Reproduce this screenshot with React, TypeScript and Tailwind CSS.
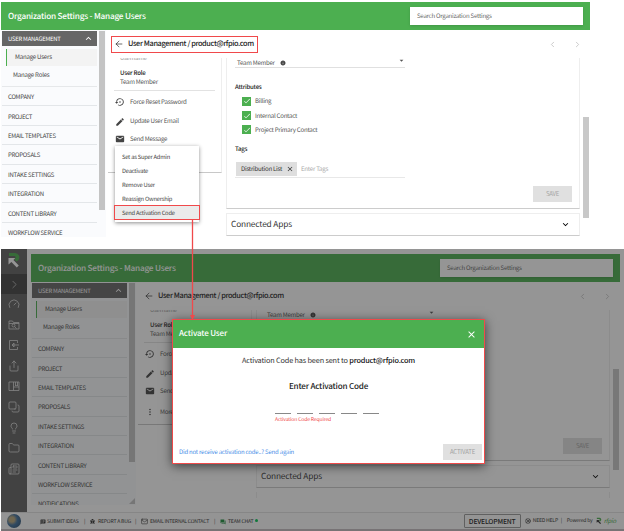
import type { ReactNode } from 'react';
import { ArrowLeft, ChevronLeft, ChevronRight, Copy, Folder, Gauge, Lightbulb, LifeBuoy, Mail, Newspaper, Share } from 'lucide-react';
import { FaBug } from 'react-icons/fa';
import {
    MdArrowDropDown, MdCheck, MdClose, MdEdit, MdEmail, MdForum, MdInfo,
    MdKeyboardArrowDown, MdKeyboardArrowUp, MdMoreVert, MdSettingsBackupRestore, MdSpeakerNotes,
} from 'react-icons/md';

const sections = ['COMPANY', 'PROJECT', 'EMAIL TEMPLATES', 'PROPOSALS', 'INTAKE SETTINGS', 'INTEGRATION', 'CONTENT LIBRARY', 'WORKFLOW SERVICE'];
const attributes = ['Billing', 'Internal Contact', 'Project Primary Contact'];
const menuItems = ['Set as Super Admin', 'Deactivate', 'Remove User', 'Reassign Ownership'];

function Logo({ className }: { className: string }) {
    return (
        <svg viewBox="0 0 14 17" className={className}>
            <path d="M2 1h6a4.3 4.3 0 0 1 3.2 7.2L9.6 9.6 7.2 7.2A1.7 1.7 0 0 0 7.6 4H2z" fill="#4caf50" />
            <path d="M1.5 6h6.8L6.4 8l5.4 5.6-2 2L4.4 10l-2.9 2.6z" fill="currentColor" />
        </svg>
    );
}

function Sidebar({ full }: { full?: boolean }) {
    return (
        <aside className="flex w-[105px] shrink-0 justify-between overflow-hidden bg-[#fafbfd] pt-px text-[#444]">
            <div className="ml-px w-[95px]">
                <div className="flex h-[15px] items-center justify-between bg-[#666] pr-[3px] pl-[6px] text-[5.9px] tracking-[-0.22px] text-white">
                    <span>USER MANAGEMENT</span>
                    <MdKeyboardArrowUp size={11} />
                </div>
                <div className="h-[41px] border-b border-[#e6e8ea] pt-[3px] text-[6.1px] tracking-[-0.22px]">
                    <div className="ml-[4px] flex h-[17px] items-center border-l border-[#4caf50] bg-[#f3f3f3] pl-[8px]">Manage Users</div>
                    <div className="flex h-[18px] items-center pl-[11px]">Manage Roles</div>
                </div>
                {sections.map((name) => (
                    <div key={name} className="flex h-[19.4px] items-center border-b border-[#e3e6e9] pt-[2px] pl-[6px] text-[6px] tracking-[-0.25px]">{name}</div>
                ))}
                {full && <div className="pt-[7px] pl-[6px] text-[6px] tracking-[-0.25px]">NOTIFICATIONS</div>}
            </div>
            <div className="mr-px flex flex-col justify-between">
                <div className="h-[179px] w-[6px] bg-[#c4c4c4]" />
                {full && <svg className="mb-px h-[6px] w-[6px]" viewBox="0 0 6 6"><path d="M6 0v6H0z" fill="#c4c4c4" /></svg>}
            </div>
        </aside>
    );
}

function Action({ icon, label, className }: { icon: ReactNode; label: string; className: string }) {
    return (
        <div className={`flex items-center pl-[7px] text-[6.15px] tracking-[-0.26px] ${className}`}>
            <span className="w-[15px] text-[#444]">{icon}</span>
            {label}
        </div>
    );
}

function UserCard({ more }: { more?: boolean }) {
    return (
        <div className="ml-[2px] h-[115px] w-[114px] shrink-0 border-r border-b border-r-[#eee] border-b-[#c8c8c8] text-[#555]">
            <div className="flex h-[2px] items-end overflow-hidden pl-[12px] text-[5.85px] leading-[4px] text-[#999]">Username</div>
            <div className="mx-[6px] h-[31px] border-b border-[#e2e2e2] pt-[8px] pl-[6px] text-[6.15px] leading-[9px] tracking-[-0.26px]">
                <div className="font-medium text-[#222]">User Role</div>
                <div>Team Member</div>
            </div>
            <Action className="h-[22px]" icon={<MdSettingsBackupRestore size={10} />} label="Force Reset Password" />
            <Action className="h-[17px]" icon={<MdEdit size={10} />} label="Update User Email" />
            <Action className="h-[18px]" icon={<MdEmail size={10} />} label="Send Message" />
            {more && <Action className="h-[24px]" icon={<MdMoreVert size={10} />} label="More" />}
        </div>
    );
}

function FormCard() {
    return (
        <div className="h-[151px] shrink-0 border-x border-b border-x-[#eee] border-b-[#ccc] pr-[7px] pl-[8px] text-[6.1px] tracking-[-0.24px] text-[#555]">
            <div className="flex h-[10px] w-[170px] items-center border-b border-[#e0e0e0] pt-px pl-[2px]">
                Team Member <MdInfo size={6} className="ml-[5px] text-[#444]" />
                <MdArrowDropDown size={9} className="-mr-px mb-[6px] ml-auto" />
            </div>
            <div className="mt-[14px] flex h-[10px] items-center font-medium text-[#222]">Attributes</div>
            <div className="mt-[2px]">
                {attributes.map((name) => (
                    <div key={name} className="flex h-[14.4px] items-center gap-[4px] pl-[7px]">
                        <span className="flex size-[9px] items-center justify-center bg-[#4caf50] text-white"><MdCheck size={8} /></span>
                        {name}
                    </div>
                ))}
            </div>
            <div className="mt-[6px] flex h-[12px] items-center font-medium text-[#222]">Tags</div>
            <div className="mt-[7px] flex h-[16px] w-[170px] border-b border-[#e8e8e8] pl-px">
                <span className="flex h-[14px] w-[61px] items-center justify-between bg-[#dedede] pr-[3px] pl-[5px] whitespace-nowrap text-[#333]">
                    Distribution List <MdClose size={8} />
                </span>
                <span className="flex h-[14px] items-center pl-[4px] text-[#aaa]">Enter Tags</span>
            </div>
            <button className="mt-[8px] ml-auto flex h-[16px] w-[39px] items-center justify-center bg-[#e0e0e0] text-[6px] text-[#a5a5a5]">SAVE</button>
        </div>
    );
}

function Settings({ more, framed }: { more?: boolean; framed?: boolean }) {
    return (
        <div className="flex h-full w-[589px] flex-col">
            <header className="flex h-[28px] shrink-0 items-center justify-between bg-[#4caf50] pr-[7px] pl-[7px]">
                <h1 className="text-[8.2px] font-medium tracking-[-0.2px] text-white">Organization Settings - Manage Users</h1>
                <div className="flex h-[18px] w-[173px] items-center bg-white pl-[7px] text-[6.05px] tracking-[-0.23px] text-[#666] shadow-sm">Search Organization Settings</div>
            </header>
            <div className="flex min-h-0 grow">
                <Sidebar full={more} />
                <main className="flex min-w-0 grow flex-col">
                    <div className="flex h-[28px] shrink-0 items-center justify-between pr-[8px] pl-[5px]">
                        <div className={`flex h-[17px] w-[147px] items-center border-[1.5px] text-[7.35px] font-medium tracking-[-0.37px] text-[#222] ${framed ? 'border-[#f0494b]' : 'border-transparent'}`}>
                            <ArrowLeft size={10} strokeWidth={1.6} className="mr-[4px] ml-[2px] shrink-0" />
                            <span className="whitespace-nowrap">User Management / product@rfpio.com</span>
                        </div>
                        <div className="flex gap-[16px] text-[#bbb]">
                            <ChevronLeft size={9} />
                            <ChevronRight size={9} />
                        </div>
                    </div>
                    <div className="flex max-h-[188px] min-h-0 overflow-hidden">
                        <UserCard more={more} />
                        <div className="ml-[4px] flex w-[354px] flex-col">
                            <FormCard />
                            <div className="mt-[4px] flex h-[23px] shrink-0 items-center justify-between border border-[#eee] border-b-[#ccc] pr-[8px] pl-[4px] text-[8.3px] text-[#333]">
                                Connected Apps <MdKeyboardArrowDown size={11} className="text-black" />
                            </div>
                            <div className="mt-[4px] h-[10px] shrink-0 border-x border-[#eee]" />
                        </div>
                        <div className="mt-[59px] ml-[3px] h-[101px] w-[6px] bg-[#c8c8c8]" />
                    </div>
                </main>
            </div>
        </div>
    );
}

function Rail() {
    return (
        <nav className="flex w-[26px] shrink-0 flex-col items-center bg-[#606060] text-[#ddd]">
            <Logo className="mt-[3px] h-[17px] w-[14px] shrink-0 text-white" />
            <div className="mt-[5px] flex h-[20px] w-full items-center justify-center bg-[#424242] text-[#bbb]"><ChevronRight size={13} strokeWidth={1.5} /></div>
            <div className="mt-[4px] flex flex-col items-center gap-[8.6px]">
                <Gauge size={12} strokeWidth={1.6} />
                <svg width="12" height="12" viewBox="0 0 24 24" fill="none" stroke="currentColor" strokeWidth="1.6">
                    <path d="M2 20V4h7l2 3h11v13zM2 9h20" />
                    <circle cx="11" cy="13" r="3" />
                    <path d="m13 15 4 4" />
                </svg>
                <svg width="12" height="12" viewBox="0 0 24 24" fill="none" stroke="currentColor" strokeWidth="1.6">
                    <path d="M19 8V3H3v18h16v-5M22 12H8M12 8l-4 4 4 4M12 8v8" />
                </svg>
                <Share size={12} strokeWidth={1.6} />
                <svg width="12" height="12" viewBox="0 0 24 24" fill="none" stroke="currentColor" strokeWidth="1.6">
                    <path d="M2 4h20v17H2zM11 4v17M15 4v8l2-2 2 2V4M11 14h11" />
                </svg>
                <Copy size={12} strokeWidth={1.6} className="rotate-180" />
                <Lightbulb size={12} strokeWidth={1.6} />
                <Folder size={12} strokeWidth={1.6} />
                <Newspaper size={12} strokeWidth={1.6} />
            </div>
        </nav>
    );
}

function Footer() {
    return (
        <footer className="flex h-[17px] shrink-0 items-center border-t border-[#e2e2e2] bg-[#fdfdfd] text-[5.1px] tracking-[-0.2px] whitespace-nowrap text-[#333]">
            <span className="ml-[6px] size-[14px] shrink-0 rounded-full bg-[radial-gradient(circle_at_35%_40%,#b9a77c_0_20%,#3f6f9d_45%,#24435f_100%)]" />
            <div className="ml-[19px] flex items-center pt-px">
                <span className="flex w-[44px] items-center gap-px"><MdSpeakerNotes size={6} />SUBMIT IDEAS</span>
                <span className="w-[6px]">|</span>
                <span className="flex w-[45px] items-center gap-[3px]"><FaBug size={5} />REPORT A BUG</span>
                <span className="w-[6px]">|</span>
                <span className="flex w-[73px] items-center gap-[2px]"><Mail size={7} />EMAIL INTERNAL CONTACT</span>
                <span className="w-[6px]">|</span>
                <span className="flex items-center gap-[2px]"><MdForum size={6} className="text-[#1e8e3e]" />TEAM CHAT</span>
                <span className="mb-[3px] ml-[2px] size-[3px] rounded-full bg-[#00c853]" />
            </div>
            <div className="mr-[8px] ml-auto flex items-center">
                <span className="flex h-[14px] w-[57px] items-center justify-center rounded-[1px] border border-[#999] text-[6.8px] font-medium text-[#222]">DEVELOPMENT</span>
                <LifeBuoy size={6} className="mr-[2px] ml-[4px]" />
                <span className="w-[28px]">NEED HELP</span>
                <span className="w-[6px]">|</span>
                <span className="w-[29px]">Powered by</span>
                <Logo className="mr-[2px] h-[8px] w-[6px]" />
                <span className="text-[6px] text-[#4caf50] italic">rfpio</span>
            </div>
        </footer>
    );
}

function ActionMenu() {
    return (
        <div className="absolute top-[146px] left-[115px] w-[84px] bg-white pt-[3px] pb-[2px] text-[5.8px] tracking-[-0.24px] text-[#444] shadow-[0_1px_4px_rgba(0,0,0,0.45)]">
            {menuItems.map((item) => (
                <div key={item} className="flex h-[14px] items-center pt-px pl-[7px]">{item}</div>
            ))}
            <div className="-mx-px flex h-[15px] items-center border border-[#f0494b] bg-[#ebebeb] pl-[7px]">Send Activation Code</div>
        </div>
    );
}

function ActivateDialog() {
    return (
        <div className="absolute top-[319px] left-[172px] flex h-[145px] w-[313px] flex-col border-[1.5px] border-[#ef4a4a] bg-white text-[#333] shadow-[0_2px_10px_rgba(0,0,0,0.6)]">
            <div className="flex h-[28px] shrink-0 items-center justify-between bg-[#4caf50] pr-[7px] pl-[6px] text-[8px] font-medium text-white">
                Activate User <MdClose size={11} />
            </div>
            <p className="mt-[7px] text-center text-[7.3px] leading-[12px]">
                Activation Code has been sent to <span className="font-medium text-[#111]">product@rfpio.com</span>
            </p>
            <h2 className="mt-[13px] text-center text-[8.1px] leading-[13px] font-medium tracking-[-0.2px] text-[#222]">Enter Activation Code</h2>
            <div className="mt-[20px] ml-[102px] flex gap-[6.5px]">
                {[0, 1, 2, 3, 4].map((i) => <span key={i} className="h-px w-[15.5px] bg-[#888]" />)}
            </div>
            <div className="ml-[102px] pt-px text-[5.1px] leading-[9px] tracking-[-0.16px] text-[#f0494b]">Activation Code Required</div>
            <div className="mt-auto mb-[3px] flex items-center justify-between pr-[2px] pl-[6px]">
                <a className="text-[6px] tracking-[-0.2px] text-[#4a90e8]">Did not receive activation code..? Send again</a>
                <button className="h-[16px] w-[39px] bg-[#e0e0e0] text-[6px] text-[#a0a0a0]">ACTIVATE</button>
            </div>
        </div>
    );
}

export default function App() {
    return (
        <div className="relative h-[531px] w-[624px] overflow-hidden bg-white font-['Noto_Sans_CJK_SC',sans-serif] leading-none tracking-[-0.15px] [text-rendering:geometricPrecision]">
            <section className="h-[237px] overflow-hidden pt-[2px] pl-px">
                <Settings framed />
            </section>
            <section className="relative mt-[12px] ml-px flex h-[282px] flex-col">
                <div className="flex h-[263px] bg-white">
                    <Rail />
                    <div className="ml-[4px] h-[256px] pt-[5px]"><Settings more /></div>
                </div>
                <Footer />
                <div className="h-[2px] bg-[#c5bfc2]" />
                <div className="absolute inset-0 bg-[#212121]/48" />
            </section>
            <ActionMenu />
            <ActivateDialog />
            <svg className="absolute top-[219px] left-[189px]" width="7" height="101" viewBox="0 0 7 101">
                <path d="M3.5 0v97" stroke="#f0494b" strokeWidth="1.3" />
                <path d="M1 96h5l-2.5 5z" fill="#f0494b" />
            </svg>
        </div>
    );
}
